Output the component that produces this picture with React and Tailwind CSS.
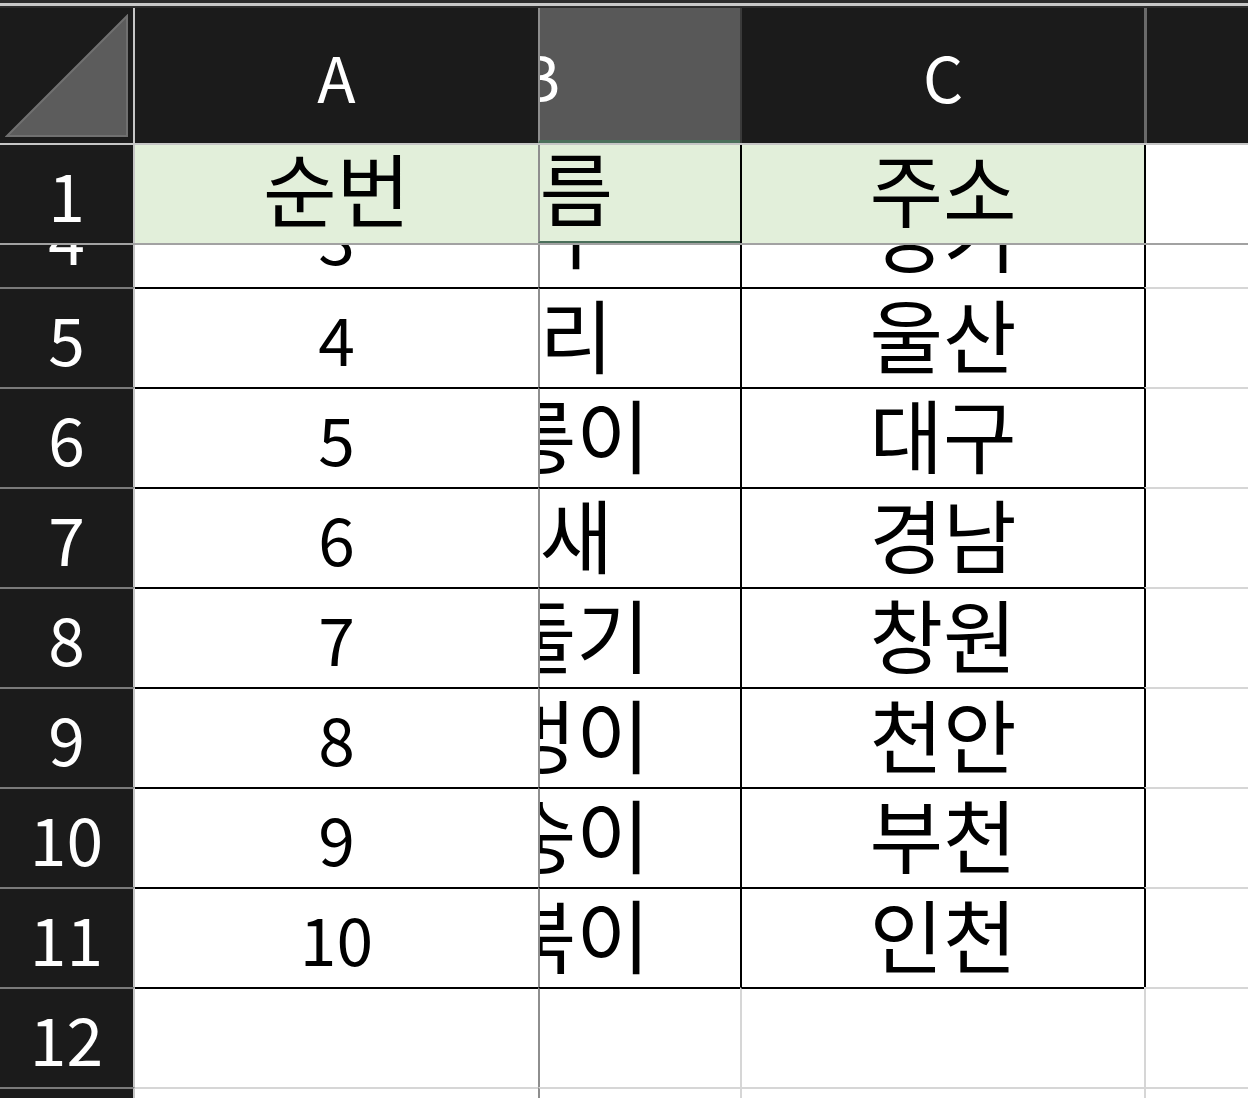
import React from 'react'

const rows = [
  { n: '4', a: '3', b: '여우', c: '경기' },
  { n: '5', a: '4', b: '오리', c: '울산' },
  { n: '6', a: '5', b: '보릉이', c: '대구' },
  { n: '7', a: '6', b: '참새', c: '경남' },
  { n: '8', a: '7', b: '비둘기', c: '창원' },
  { n: '9', a: '8', b: '멍멍이', c: '천안' },
  { n: '10', a: '9', b: '원숭이', c: '부천' },
  { n: '11', a: '10', b: '거북이', c: '인천' },
]

function RowHead({ children, className = '' }) {
  return (
    <div className={`flex w-[135px] shrink-0 items-center justify-center border-r-2 border-[#c6c6c6] bg-[#1b1b1b] text-[66px] leading-none text-white ${className}`}>
      <span className="mb-[2px]">{children}</span>
    </div>
  )
}

// B is scrolled: only its right half shows past the frozen line
function BCell({ children, className = '', lift = 'mb-[12px]' }) {
  return (
    <div className={`flex w-[202px] shrink-0 overflow-hidden border-l-2 border-[#8e8e8e] ${className}`}>
      <div className="ml-[-203px] flex w-[405px] shrink-0 items-center justify-center">
        <span className={`${lift} text-[80px]`}>{children}</span>
      </div>
    </div>
  )
}

function DataRow({ r }) {
  return (
    <div className="flex h-[100px] shrink-0">
      <RowHead className="border-t-2 border-t-[#7a7a7a]">{r.n}</RowHead>
      <div className="flex w-[403px] shrink-0 items-center justify-center border-t-2 border-black">
        <span className="mb-[2px]">{r.a}</span>
      </div>
      <BCell className="border-t-2 border-t-black">{r.b}</BCell>
      <div className="flex w-[404px] shrink-0 items-center justify-center border-l-2 border-t-2 border-black">
        <span className="mb-[12px] text-[80px]">{r.c}</span>
      </div>
      <div className="flex-1 border-l-2 border-t-2 border-l-black border-t-[#d6d6d6]" />
    </div>
  )
}

export default function App() {
  return (
    <div className="h-[1098px] w-[1248px] overflow-hidden bg-white font-['Noto_Sans_CJK_KR','Noto_Sans',sans-serif] text-[66px] leading-none text-black">
      <div className="h-[3px] bg-[#2c2c2c]" />
      <div className="h-[3px] bg-[#c8c8c8]" />
      <div className="h-[2px] bg-[#2c2c2c]" />

      {/* column headers */}
      <div className="flex h-[137px] border-b-2 border-[#c6c6c6] bg-[#1b1b1b] text-white">
        <div className="flex w-[135px] shrink-0 items-end justify-end border-r-2 border-[#c6c6c6] pb-[5px] pr-[4px]">
          <svg width="124" height="124" viewBox="0 0 124 124">
            <polygon points="2,122 122,2 122,122" fill="#5c5c5c" stroke="#707070" strokeWidth="2" />
          </svg>
        </div>
        <div className="flex w-[403px] shrink-0 items-center justify-center">
          <span className="text-[63px]">A</span>
        </div>
        <div className="flex w-[202px] shrink-0 overflow-hidden border-b-[3px] border-l-2 border-b-[#4b705b] border-l-[#8e8e8e] bg-[#585858]">
          <div className="ml-[-203px] flex w-[405px] shrink-0 items-center justify-center">
            <span className="text-[63px]">B</span>
          </div>
        </div>
        <div className="flex w-[404px] shrink-0 items-center justify-center border-l-2 border-[#3a3a3a]">
          <span className="text-[63px]">C</span>
        </div>
        <div className="flex-1 border-l-[3px] border-[#6a6a6a]" />
      </div>

      {/* row 1, frozen */}
      <div className="flex h-[100px] border-b-2 border-[#a2a2a2]">
        <RowHead>1</RowHead>
        <div className="flex w-[403px] shrink-0 items-center justify-center bg-[#e2efda]">
          <span className="mb-[16px] text-[80px]">순번</span>
        </div>
        <BCell className="border-b-2 border-b-[#4b705b] bg-[#e2efda]" lift="mb-[16px]">이름</BCell>
        <div className="flex w-[404px] shrink-0 items-center justify-center border-l-2 border-black bg-[#e2efda]">
          <span className="mb-[16px] text-[80px]">주소</span>
        </div>
        <div className="flex-1 border-l-2 border-black" />
      </div>

      {/* row 4, scrolled so only its bottom shows */}
      <div className="flex h-[42px] flex-col justify-end overflow-hidden">
        <div className="flex h-[100px] shrink-0">
          <RowHead>{rows[0].n}</RowHead>
          <div className="flex w-[403px] shrink-0 items-center justify-center">
            <span className="mb-[2px]">{rows[0].a}</span>
          </div>
          <BCell lift="mb-[20px]">{rows[0].b}</BCell>
          <div className="flex w-[404px] shrink-0 items-center justify-center border-l-2 border-black">
            <span className="mb-[12px] text-[80px]">{rows[0].c}</span>
          </div>
          <div className="flex-1 border-l-2 border-black" />
        </div>
      </div>

      {rows.slice(1).map((r) => (
        <DataRow key={r.n} r={r} />
      ))}

      {/* row 12 */}
      <div className="flex h-[100px] shrink-0">
        <RowHead className="border-t-2 border-t-[#7a7a7a]">12</RowHead>
        <div className="w-[403px] shrink-0 border-t-2 border-black" />
        <div className="w-[202px] shrink-0 border-l-2 border-t-2 border-l-[#8e8e8e] border-t-black" />
        <div className="w-[404px] shrink-0 border-l-2 border-t-2 border-l-[#d6d6d6] border-t-black" />
        <div className="flex-1 border-l-2 border-t-2 border-[#d6d6d6]" />
      </div>

      {/* row 13 edge */}
      <div className="flex h-[20px]">
        <RowHead className="border-t-2 border-t-[#7a7a7a]" />
        <div className="w-[403px] shrink-0 border-t-2 border-[#d6d6d6]" />
        <div className="w-[202px] shrink-0 border-l-2 border-t-2 border-l-[#8e8e8e] border-t-[#d6d6d6]" />
        <div className="w-[404px] shrink-0 border-l-2 border-t-2 border-[#d6d6d6]" />
        <div className="flex-1 border-l-2 border-t-2 border-[#d6d6d6]" />
      </div>
    </div>
  )
}
